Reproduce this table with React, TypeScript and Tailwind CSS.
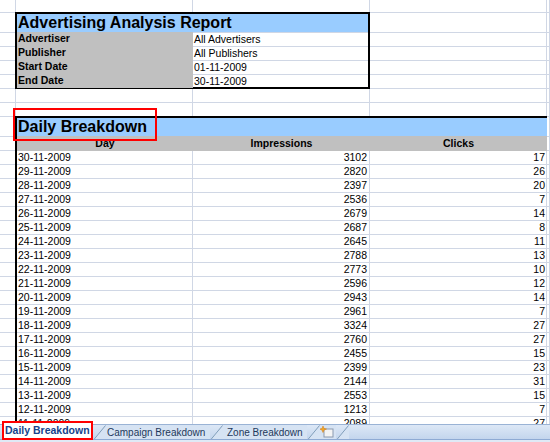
import React from 'react'

const font = { fontFamily: '"Liberation Sans", Arial, sans-serif' }

const report = [
  ['Advertiser', 'All Advertisers'],
  ['Publisher', 'All Publishers'],
  ['Start Date', '01-11-2009'],
  ['End Date', '30-11-2009'],
]

const daily: [string, number, number][] = [
  ['30-11-2009', 3102, 17],
  ['29-11-2009', 2820, 26],
  ['28-11-2009', 2397, 20],
  ['27-11-2009', 2536, 7],
  ['26-11-2009', 2679, 14],
  ['25-11-2009', 2687, 8],
  ['24-11-2009', 2645, 11],
  ['23-11-2009', 2788, 13],
  ['22-11-2009', 2773, 10],
  ['21-11-2009', 2596, 12],
  ['20-11-2009', 2943, 14],
  ['19-11-2009', 2961, 7],
  ['18-11-2009', 3324, 27],
  ['17-11-2009', 2760, 27],
  ['16-11-2009', 2455, 15],
  ['15-11-2009', 2399, 23],
  ['14-11-2009', 2144, 31],
  ['13-11-2009', 2553, 15],
  ['12-11-2009', 1213, 7],
  ['11-11-2009', 2089, 27],
]

// rows covered by the two bordered blocks don't get plain grid cells
function isCovered(r: number, c: number) {
  if (c >= 1 && c <= 2 && r >= 1 && r <= 5) return true
  if (c >= 1 && c <= 3 && r >= 8) return true
  return false
}

function Sheet() {
  const cells = []
  for (let r = 0; r < 30; r++) {
    for (let c = 0; c < 5; c++) {
      if (isCovered(r, c)) continue
      cells.push(<div key={`${r}-${c}`} className="border-r border-b border-[#d0d7e5]" />)
    }
  }

  return (
    <div className="h-[424px] overflow-hidden bg-white">
      <div className="grid grid-cols-[16px_177px_177px_177px_1fr] grid-rows-[13px_20px_repeat(6,14px)_20px_repeat(21,14px)]">
        {cells}

        <div className="col-start-2 col-end-4 row-start-2 row-end-7 -ml-px -mt-px flex flex-col border-2 border-black">
          <div className="flex-1 bg-[#99ccff] pl-px text-[16px] font-bold leading-[18px] text-black">
            Advertising Analysis Report
          </div>
          {report.map(([label, value]) => (
            <div key={label} className="flex h-[14px] text-[10.5px] leading-[13px] text-black">
              <div className="w-[176px] bg-[#c0c0c0] pl-px font-bold">{label}</div>
              <div className="flex-1 border-t border-[#d0d7e5] pl-px">{value}</div>
            </div>
          ))}
        </div>

        <div className="col-start-2 col-end-5 row-start-9 row-end-31 -ml-px -mt-px flex flex-col border-l-2 border-t-2 border-black">
          <div className="relative h-[18px] shrink-0 bg-[#99ccff] pl-px text-[16px] font-bold leading-[18px] text-black">
            Daily Breakdown
            <div className="absolute -left-[4px] -top-[10px] h-[33px] w-[144px] border-2 border-[#ff0000]" />
          </div>
          <div className="flex h-[15px] shrink-0 bg-[#c0c0c0] text-[10.5px] font-bold leading-[14px] text-black">
            <div className="w-[176px] text-center">Day</div>
            <div className="w-[177px] text-center">Impressions</div>
            <div className="w-[177px] text-center">Clicks</div>
          </div>
          {daily.map(([day, imp, clicks]) => (
            <div key={day} className="flex h-[14px] shrink-0 text-[10.5px] leading-[13px] text-black">
              <div className="w-[176px] border-r border-b border-[#d0d7e5] pl-px">{day}</div>
              <div className="w-[177px] border-r border-b border-[#d0d7e5] pr-[2px] text-right">{imp}</div>
              <div className="w-[177px] border-r border-b border-[#d0d7e5] pr-px text-right">{clicks}</div>
            </div>
          ))}
        </div>
      </div>
    </div>
  )
}

function Slant() {
  return (
    <svg width="13" height="15" viewBox="0 0 13 15" className="shrink-0">
      <path d="M0 15 L12 0 L13 0 L13 15 Z" fill="#d6e3f3" />
      <path d="M0.5 15 L12.5 0.5" stroke="#7f9db9" strokeWidth="1" fill="none" />
    </svg>
  )
}

function TabBar() {
  return (
    <div className="flex h-[18px] flex-col">
      <div className="flex h-[15px] items-stretch border-t border-[#9ab3d5] bg-gradient-to-b from-[#dde8f6] to-[#c3d5ed]">
        <div className="relative z-10 -mt-[4px] ml-[2px] flex h-[19px] w-[91px] shrink-0 items-center whitespace-nowrap border-2 border-[#ff0000] bg-white pl-px text-[10.5px] font-bold text-[#15428b]">
          Daily Breakdown
        </div>
        <Slant />
        <div className="flex w-[104px] shrink-0 items-center whitespace-nowrap bg-[#d6e3f3] pl-px text-[10px] text-[#1e395b]">
          Campaign Breakdown
        </div>
        <Slant />
        <div className="flex w-[84px] shrink-0 items-center whitespace-nowrap bg-[#d6e3f3] pl-[4px] text-[10px] text-[#1e395b]">
          Zone Breakdown
        </div>
        <Slant />
        <div className="flex w-[16px] shrink-0 items-center bg-[#d6e3f3]">
          <svg width="14" height="12" viewBox="0 0 14 12">
            <rect x="4" y="3" width="9" height="8" fill="#f4f4f4" stroke="#8a9ab0" />
            <path d="M3 0 L4 2.5 L6.5 3 L4 4 L3 6.5 L2 4 L-0.5 3 L2 2.5 Z" fill="#f5a623" stroke="#d07a10" strokeWidth="0.5" />
          </svg>
        </div>
        <Slant />
        <div className="flex-1" />
      </div>
      <div className="h-[3px] border-t border-[#8eaad4] bg-[#dfe9f6]" />
    </div>
  )
}

export default function App() {
  return (
    <div className="w-[550px] h-[442px] overflow-hidden bg-white" style={font}>
      <Sheet />
      <TabBar />
    </div>
  )
}
